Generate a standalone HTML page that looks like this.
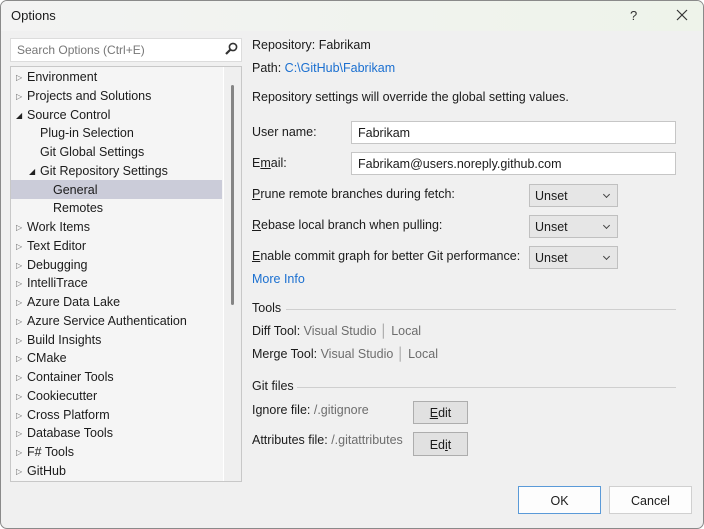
<!DOCTYPE html>
<html><head><style>
*{margin:0;padding:0;box-sizing:border-box}
body{width:704px;height:529px;background:#fff;font-family:"Liberation Sans",sans-serif;font-size:12px;color:#1b1b1b;overflow:hidden;position:relative}
.win{position:absolute;left:0;top:0;width:704px;height:529px;background:#f0f0f0;border:1px solid #8a8a8a;border-radius:7px;overflow:hidden}
.title{position:absolute;left:0;top:0;width:702px;height:30px;background:linear-gradient(90deg,#f3f3f3,#eef3ea)}
.a{position:absolute;white-space:nowrap}
.tree{position:absolute;left:9px;top:65px;width:232px;height:416px;background:#f5f5f5;border:1px solid #c8c8c8}
.sb{position:absolute;left:212px;top:0;width:18px;height:414px;background:#efefef;border-left:1px solid #fff}
.thumb{position:absolute;left:7px;top:18px;width:3px;height:220px;background:#858585;border-radius:2px}
.sel{position:absolute;left:0;top:113px;width:211px;height:19px;background:#cbccd9}
.rows div{height:18.76px;line-height:18px;white-space:nowrap}
.tri{display:inline-block;width:11px;color:#666;font-size:8px;line-height:10px;vertical-align:1px}
.inp{position:absolute;background:#fff;border:1px solid #c6c6c6;height:23px;padding:4px 6px;font-size:12.5px}
.dd{position:absolute;left:528px;width:89px;height:23px;background:#e6e6e6;border:1px solid #c0c0c0;padding:4px 5px;font-size:12.5px}
.dd:after{content:"";position:absolute;right:8px;top:7px;width:4px;height:4px;border-right:1px solid #444;border-bottom:1px solid #444;transform:rotate(45deg)}
.btn{position:absolute;background:#e1e1e1;border:1px solid #adadad;text-align:center;font-size:12.5px}
.gray{color:#6d6d6d}
.line{position:absolute;height:1px;background:#cfcfcf}
</style></head><body><div class="win">
<div class="title"></div>
<div class="a" style="left:10px;top:7px;font-size:13px">Options</div>
<div class="a" style="left:629px;top:7px;font-size:13px;color:#333">?</div>
<svg class="a" style="left:675px;top:8px" width="12" height="12"><path d="M1 1L11 11M11 1L1 11" stroke="#333" stroke-width="1.2"/></svg>
<div class="inp" style="left:9px;top:37px;width:232px;height:24px;border-color:#dcdcdc;color:#777;font-size:12px">Search Options (Ctrl+E)</div>
<svg class="a" style="left:223px;top:41px" width="14" height="14"><circle cx="9" cy="5" r="3.6" fill="none" stroke="#333" stroke-width="1.6"/><path d="M6.5 7.5L2 12" stroke="#333" stroke-width="2.2"/></svg>
<div class="tree"><div class="sel"></div><div class="sb"><div class="thumb"></div></div>
<div class="rows" style="position:absolute;left:0;top:1px;font-size:12.5px">
<div style="padding-left:5px"><span class="tri">▷</span>Environment</div>
<div style="padding-left:5px"><span class="tri">▷</span>Projects and Solutions</div>
<div style="padding-left:5px"><span class="tri" style="color:#222">◢</span>Source Control</div>
<div style="padding-left:29px">Plug-in Selection</div>
<div style="padding-left:29px">Git Global Settings</div>
<div style="padding-left:18px"><span class="tri" style="color:#222">◢</span>Git Repository Settings</div>
<div style="padding-left:42px">General</div>
<div style="padding-left:42px">Remotes</div>
<div style="padding-left:5px"><span class="tri">▷</span>Work Items</div>
<div style="padding-left:5px"><span class="tri">▷</span>Text Editor</div>
<div style="padding-left:5px"><span class="tri">▷</span>Debugging</div>
<div style="padding-left:5px"><span class="tri">▷</span>IntelliTrace</div>
<div style="padding-left:5px"><span class="tri">▷</span>Azure Data Lake</div>
<div style="padding-left:5px"><span class="tri">▷</span>Azure Service Authentication</div>
<div style="padding-left:5px"><span class="tri">▷</span>Build Insights</div>
<div style="padding-left:5px"><span class="tri">▷</span>CMake</div>
<div style="padding-left:5px"><span class="tri">▷</span>Container Tools</div>
<div style="padding-left:5px"><span class="tri">▷</span>Cookiecutter</div>
<div style="padding-left:5px"><span class="tri">▷</span>Cross Platform</div>
<div style="padding-left:5px"><span class="tri">▷</span>Database Tools</div>
<div style="padding-left:5px"><span class="tri">▷</span>F# Tools</div>
<div style="padding-left:5px"><span class="tri">▷</span>GitHub</div>
</div></div>
<div style="font-size:12.5px">
<div class="a" style="left:251px;top:37px">Repository: Fabrikam</div>
<div class="a" style="left:251px;top:60px">Path: <span style="color:#1a6fd0">C:\GitHub\Fabrikam</span></div>
<div class="a" style="left:251px;top:89px">Repository settings will override the global setting values.</div>
<div class="a" style="left:251px;top:124px">User name:</div>
<div class="inp" style="left:350px;top:120px;width:325px">Fabrikam</div>
<div class="a" style="left:251px;top:155px">E<u>m</u>ail:</div>
<div class="inp" style="left:350px;top:151px;width:325px">Fabrikam@users.noreply.github.com</div>
<div class="a" style="left:251px;top:186px"><u>P</u>rune remote branches during fetch:</div>
<div class="dd" style="top:183px">Unset</div>
<div class="a" style="left:251px;top:217px"><u>R</u>ebase local branch when pulling:</div>
<div class="dd" style="top:214px">Unset</div>
<div class="a" style="left:251px;top:248px"><u>E</u>nable commit graph for better Git performance:</div>
<div class="dd" style="top:245px">Unset</div>
<div class="a" style="left:251px;top:271px;color:#1a6fd0">More Info</div>
<div class="a" style="left:251px;top:300px">Tools</div><div class="line" style="left:285px;top:308px;width:390px"></div>
<div class="a" style="left:251px;top:323px">Diff Tool: <span class="gray">Visual Studio</span> <span style="color:#999">│</span> <span class="gray">Local</span></div>
<div class="a" style="left:251px;top:346px">Merge Tool: <span class="gray">Visual Studio</span> <span style="color:#999">│</span> <span class="gray">Local</span></div>
<div class="a" style="left:251px;top:378px">Git files</div><div class="line" style="left:296px;top:386px;width:379px"></div>
<div class="a" style="left:251px;top:402px">Ignore file: <span class="gray">/.gitignore</span></div>
<div class="btn" style="left:412px;top:400px;width:55px;height:23px;padding-top:4px"><u>E</u>dit</div>
<div class="a" style="left:251px;top:432px">Attributes file: <span class="gray">/.gitattributes</span></div>
<div class="btn" style="left:412px;top:431px;width:55px;height:24px;padding-top:5px">Ed<u>i</u>t</div>
<div class="btn" style="left:517px;top:485px;width:83px;height:28px;padding-top:7px;background:#fdfdfd;border-color:#5a9ad8">OK</div>
<div class="btn" style="left:608px;top:485px;width:83px;height:28px;padding-top:7px;background:#fdfdfd;border-color:#d0d0d0">Cancel</div>
</div>
</div></body></html>
